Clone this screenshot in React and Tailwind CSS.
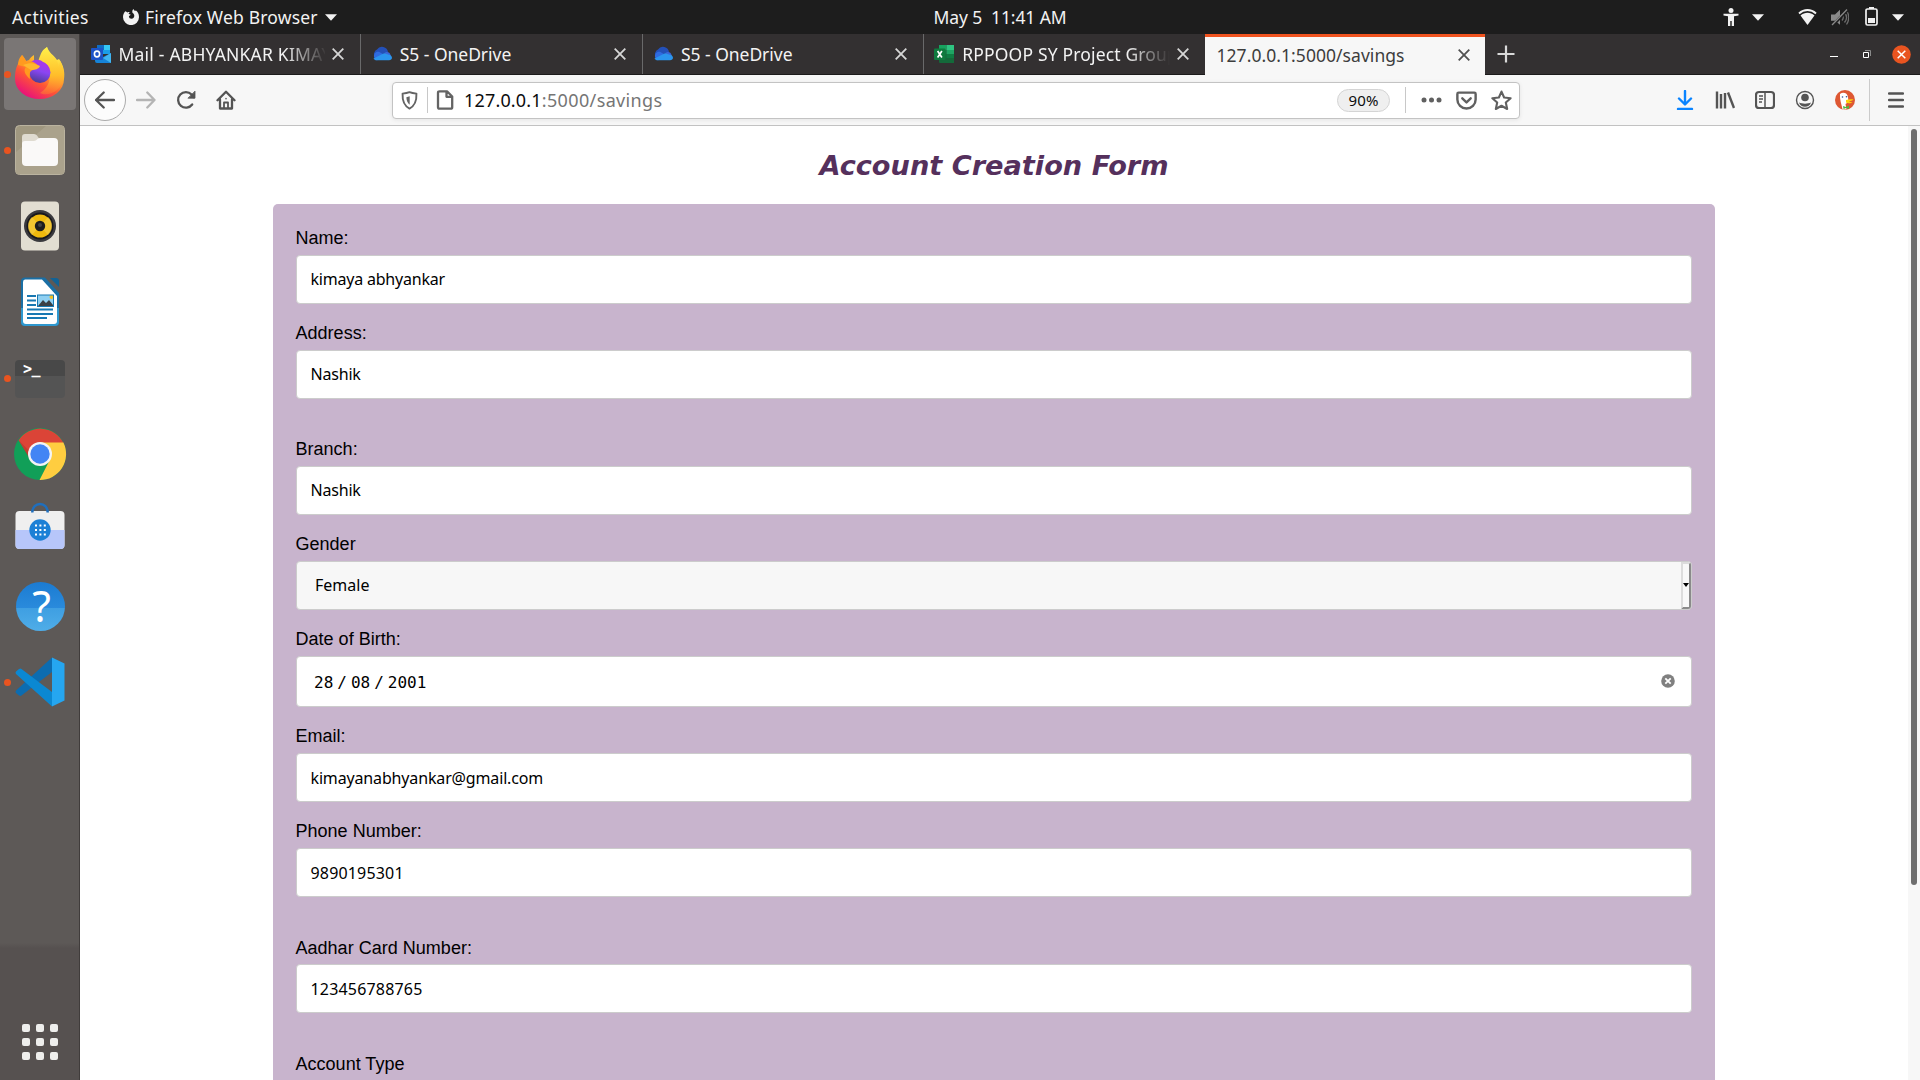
const FIELDS = [
  { label: "Name:", value: "kimaya abhyankar", spacing: "tracking-[-0.21px]" },
  { label: "Address:", value: "Nashik", spacing: "tracking-[-0.2px]", gap: true },
  { label: "Branch:", value: "Nashik", spacing: "tracking-[-0.2px]" },
  { label: "Gender", value: "Female", kind: "select" },
  { label: "Date of Birth:", kind: "date" },
  { label: "Email:", value: "kimayanabhyankar@gmail.com", spacing: "pt-px tracking-[-0.15px]" },
  { label: "Phone Number:", value: "9890195301", spacing: "pt-px tracking-[0.17px]", gap: true },
  { label: "Aadhar Card Number:", value: "123456788765", spacing: "pt-px tracking-[0.18px]", gap: true, low: true },
];

const Caret = () => (
  <svg className="block h-[7px] w-3" viewBox="0 0 12 7">
    <path d="M0 .3h12L6 6.8z" fill="#f2f2f2" />
  </svg>
);

function TopBar() {
  return (
    <div className="grid h-[34px] shrink-0 grid-cols-3 items-center bg-[#1d1d1d] text-[17.5px] leading-[34px] text-[#f2f2f2]">
      <div className="flex items-center pl-3">
        <span className="w-[111px] tracking-[0.4px]">Activities</span>
        <svg className="mr-[6px] h-4 w-4" viewBox="0 0 16 16">
          <path d="M2.3 2.2c.8.2 1.5.6 2 1.2 1-.5 2-.5 2.7-.3-.9.5-1.3 1.1-1.3 1.9l1.9.5c0 .8-1.2 1-1.7 1.7 0 1.7 1.2 2.5 2.5 2.5 2 0 2.9-1.4 2.9-2.9 0-1.6-1-2.3-1.7-2.7C9 2.7 9.2 1 10.6 0c.2 1 .8 1.5 1.7 2.1.3-.2.4-.5.4-.8C14.7 2.8 16 5 16 8a8 8 0 0 1-16 .2C0 5.8.8 3.7 2.3 2.2z" fill="#f2f2f2" />
        </svg>
        <span className="mr-[7px] tracking-[0.18px]">Firefox Web Browser</span>
        <Caret />
      </div>
      <div className="whitespace-pre pl-20 text-center tracking-[-0.1px]">May 5  11:41 AM</div>
      <div className="flex items-center justify-end pr-[16px]">
        <svg className="mr-[13px] h-[18px] w-4" viewBox="0 0 16 18">
          <circle cx="8" cy="2.5" r="2.5" fill="#f2f2f2" />
          <path d="M.5 5.8h15v1.7L11 8.3V18H8.7v-5H7.3v5H5V8.300L.5 7.5z" fill="#f2f2f2" />
        </svg>
        <Caret />
        <svg className="ml-[34px] h-4 w-[19px]" viewBox="0 0 19 16">
          <path d="M1 4.5C6-.2 13-.2 18 4.5" fill="none" stroke="#f2f2f2" strokeWidth="1.8" />
          <path d="M2.5 6.5c4.2-3.6 9.8-3.6 14 0L9.500 16z" fill="#f2f2f2" />
        </svg>
        <svg className="ml-[14px] h-[17px] w-[18px]" viewBox="0 0 18 17">
          <path d="M0 5.5h4L9 .8v15l-5-4H0z" fill="#8a8a8a" />
          <path d="M11 5.5c1.500 1.8 1.5 4.2 0 6M13.5 3.5c2.5 3 2.5 7 0 10M15.5 1.5c2.800 4.300 2.800 9.700 0 14" fill="none" stroke="#6d6d6d" strokeWidth="1.3" />
          <path d="M1.5 16.5 16.5 1" stroke="#1d1d1d" strokeWidth="3" />
          <path d="M1 16 16 .5" stroke="#8a8a8a" strokeWidth="1.3" />
        </svg>
        <svg className="-mt-px ml-[16px] h-[19px] w-[13px]" viewBox="0 0 13 19">
          <rect x="1" y="2" width="11" height="16" rx="1.5" fill="none" stroke="#f2f2f2" strokeWidth="1.7" />
          <path d="M4 0h5v2H4zM3 11h7v5H3z" fill="#f2f2f2" />
        </svg>
        <div className="ml-[14px]"><Caret /></div>
      </div>
    </div>
  );
}

const FirefoxIcon = () => (
  <svg viewBox="0 0 72 72" className="size-[72px]">
    <defs>
      <linearGradient id="ff1" x1=".85" y1=".1" x2=".3" y2="1">
        <stop offset="0" stopColor="#fff44f" />
        <stop offset=".35" stopColor="#ffb52b" />
        <stop offset=".65" stopColor="#ff5634" />
        <stop offset="1" stopColor="#e8107c" />
      </linearGradient>
      <linearGradient id="ff2" x1=".7" y1="0" x2=".4" y2="1">
        <stop offset="0" stopColor="#b533e5" />
        <stop offset=".45" stopColor="#8a45f2" />
        <stop offset="1" stopColor="#4b3d97" />
      </linearGradient>
      <linearGradient id="ff3" x1="0" y1="0" x2="0" y2="1">
        <stop offset="0" stopColor="#fff14a" />
        <stop offset=".6" stopColor="#ffbd2a" />
        <stop offset="1" stopColor="#ff7a33" stopOpacity=".5" />
      </linearGradient>
    </defs>
    <path d="M18 17c2 2 3 4 4 6l3-1c1-2 3-4 5-5v6l6 2c3-6 2-12 7-16 2 6 7 8 10 13l2-1c5 7 6 14 5 20a24.500 20 0 0 1-49 0c0-10 2-14 5-18z" fill="url(#ff1)" />
    <path d="M34 24c4-12 4-11 9-15 1 6 6 9 9 13 3 4 3 7 2 10l2-9c6 10 5 22-3 29-6 5-13 5-17 3 10-6 14-18 2-29z" fill="url(#ff3)" />
    <circle cx="36" cy="34.5" r="10.5" fill="url(#ff2)" />
    <path d="M26 25c3-4 10-4 13-1 3 1 6 4 6 8-3-3-7-4-9-3z" fill="#a33bea" />
    <path d="M18 17l5 7c3-1 5-1 8 1l4 3c-1 3-5 3-8 5-2 2-1 6-1 8-5-4-7-9-4-12l-8-2c0-4 1-7 4-10z" fill="#ff9a1f" />
    <path d="M19 27c5-2 9-2 12-1l5 2c-1 3-5 4-9 4z" fill="#ffb72e" />
  </svg>
);

const FilesIcon = () => (
  <svg viewBox="0 0 72 72" className="size-[72px]">
    <rect x="11.5" y="11.5" width="49" height="49" rx="4" fill="#a09880" stroke="#bab39f" />
    <path d="M12 38 42 12h16q2 0 2 2v44q0 2-2 2H14q-2 0-2-2z" fill="#aaa28c" />
    <path d="M18 30v-7q0-3 3-3h9q2 0 3 1.5l2 3h9v10H18z" fill="#dfdbd0" />
    <path d="M21 27h9c3 0 3-3 6-3h14q4 0 4 4v20q0 4-4 4H22q-4 0-4-4V30q0-3 3-3z" fill="#faf9f8" />
  </svg>
);

const MusicIcon = () => (
  <svg viewBox="0 0 72 72" className="size-[72px]">
    <rect x="17" y="11.5" width="38" height="49" rx="4" fill="#e2ded2" />
    <circle cx="36" cy="36" r="16" fill="#3a3a3e" />
    <circle cx="36" cy="36" r="13.5" fill="#18181d" />
    <circle cx="36" cy="36" r="11.5" fill="#efb90d" />
    <path d="M36 36 28 45A12 12 0 0 1 28 27zM36 36l8-9A12 12 0 0 1 44 45z" fill="#f7d04a" opacity=".6" />
    <circle cx="36" cy="36" r="5.2" fill="#1e1e1e" />
    <circle cx="36" cy="35" r="2" fill="#444" />
  </svg>
);

const WriterIcon = () => (
  <svg viewBox="0 0 72 72" className="size-[72px]">
    <path d="M21 11.5h20L55 27v29q0 4-4 4H21q-4 0-4-4V15.500q0-4 4-4z" fill="#1a6fa5" />
    <path d="M17 42h38v14q0 4-4 4H21q-4 0-4-4z" fill="#2f98cf" />
    <path d="M21 13.500h17L53 30v25q0 3-3 3H22q-3 0-3-3V16q0-2.500 2-2.500z" fill="#fff" />
    <path d="M46 12h6q3 0 3 3v6z" fill="#136294" />
    <path d="M23 30h9M23 34.500h9M23 39h9M23 43.500h26M23 48h26M23 52h20" stroke="#1878b2" strokeWidth="1.9" />
    <rect x="33.5" y="29" width="16" height="11.5" fill="#8fd0f2" />
    <path d="m34 40 5-6 3 3 3-3 4 5v1.500H34z" fill="#3a3f45" />
    <circle cx="47.5" cy="31" r="2" fill="#f4bf22" />
    <rect x="33.5" y="29" width="16" height="11.5" fill="none" stroke="#1878b2" />
  </svg>
);

const TerminalIcon = () => (
  <div className="flex size-[72px] items-center justify-center pt-px">
    <div className="h-[38px] w-[50px] overflow-hidden rounded-[4px] bg-[linear-gradient(#484848_42%,#545454_42%)] pl-[8px] font-['DejaVu_Sans_Mono'] text-[15px] leading-[18px] font-bold tracking-[-0.5px] text-white">&gt;_</div>
  </div>
);

const ChromeIcon = () => (
  <svg viewBox="0 0 72 72" className="size-[72px]">
    <circle cx="36" cy="36" r="26" fill="#119f58" />
    <path d="M14.600 22.200A26 26 0 0 1 59.500 25H36L26.500 41.500z" fill="#db4437" />
    <path d="M36 24.500h23.400A26 26 0 0 1 35.500 62L46 41.500z" fill="#ffcd40" />
    <path d="m14.600 22.200 11.900 20-2-10z" fill="#a8352c" opacity=".5" />
    <circle cx="36" cy="36" r="12" fill="#f4f4f4" />
    <circle cx="36" cy="36" r="9.7" fill="#4285f4" />
  </svg>
);

const SoftwareIcon = () => (
  <svg viewBox="0 0 72 72" className="size-[72px]">
    <rect x="11.5" y="17" width="49" height="38" rx="4" fill="#efefef" />
    <path d="M11.500 36h49v15q0 4-4 4h-41q-4 0-4-4z" fill="#b7c6fa" />
    <path d="M28.300 18.500C28.300 7 43.700 7 43.700 18.500" fill="none" stroke="#1f6fbe" strokeWidth="2.5" />
    <circle cx="36" cy="36" r="10.7" fill="#1c80d6" />
    <path d="M31 31.500h12M31 36h12M31 40.500h12" stroke="#fff" strokeWidth="2" strokeDasharray="2 2.4" />
  </svg>
);

const HelpIcon = () => (
  <div className="flex size-[72px] items-center justify-center">
    <div className="size-[49px] rounded-full bg-[linear-gradient(#1b7bd2_0%,#2a8bdc_54%,#3f9fe2_54%,#4fade8_100%)] pl-[3px] text-center font-['Noto_Sans'] text-[43px] leading-[47px] text-white">?</div>
  </div>
);

const CodeIcon = () => (
  <svg viewBox="0 0 72 72" className="size-[72px]">
    <path d="M48 11.500 12 44.500q-1 1.500 0 2.500l3 2.500q1.500.8 2.500 0L48 26z" fill="#0c6cb0" />
    <path d="M48 60.500 12 28q-1-1.500 0-2.500l3-2.500q1.500-.8 2.500 0L48 46z" fill="#0b88d2" />
    <path d="M48 11.500 60.500 17.500v37L48 60.500z" fill="#25a6f0" />
  </svg>
);

const DOCK = [
  { Icon: FirefoxIcon, running: true, active: true },
  { Icon: FilesIcon, running: true },
  { Icon: MusicIcon },
  { Icon: WriterIcon },
  { Icon: TerminalIcon, running: true },
  { Icon: ChromeIcon },
  { Icon: SoftwareIcon },
  { Icon: HelpIcon },
  { Icon: CodeIcon, running: true },
];

function Dock() {
  return (
    <div className="flex w-20 shrink-0 flex-col justify-between border-r border-[#403c3b] bg-[linear-gradient(#5d5957_0,#5d5957_909px,#565150_914px)] pt-1 pb-[20px]">
      <div className="flex flex-col gap-1 pl-1">
        {DOCK.map(({ Icon, running, active }, i) => (
          <div key={i} className={active ? "relative size-[72px] rounded-[4px] bg-[#7a7675]" : "relative size-[72px]"}>
            <Icon />
            {running && <div className="absolute top-[33px] left-0 size-[7px] rounded-full bg-[#e95420]" />}
          </div>
        ))}
      </div>
      <div className="ml-[22px] grid w-9 grid-cols-3 gap-[6px]">
        {Array.from({ length: 9 }, (_, i) => (
          <div key={i} className="size-2 rounded-[2px] bg-[#eeeeec]" />
        ))}
      </div>
    </div>
  );
}

const OutlookIcon = () => (
  <svg className="size-5 shrink-0" viewBox="0 0 20 20">
    <path d="M6 1h13v9H6z" fill="#1b9de8" />
    <path d="M6 1h7v5H6z" fill="#0f6cc4" />
    <path d="M13 1h6v5h-6z" fill="#35c7f5" />
    <path d="M4 9l8 4 8-4v10H6q-2 0-2-2z" fill="#1683d8" />
    <path d="m12 14 8-5v10z" fill="#41b4f0" />
    <rect y="4" width="12" height="12" rx="1" fill="#1d53c8" />
    <ellipse cx="6" cy="10" rx="2.6" ry="2.9" fill="none" stroke="#fff" strokeWidth="1.6" />
  </svg>
);

const CloudIcon = () => (
  <svg className="size-5 shrink-0" viewBox="0 0 20 20">
    <path d="M3 13a5 5 0 0 1 2-7.500A6 6 0 0 1 16 8z" fill="#2450b8" />
    <path d="M4.500 16.200A4.500 4.500 0 0 1 4.500 8c2-.5 3 0 4.500 1l9 5z" fill="#2f6be0" />
    <path d="M12 9.500c1-2 6-2.500 6.500 1.500L19 14z" fill="#3a66d8" />
    <path d="M1.500 14.500 12 9.200l6.500 2q1.500 1 1.500 2.600c0 1.600-1.300 2.500-3 2.500H4.500c-1.300 0-2.300-.7-3-1.800z" fill="#2b95ee" />
  </svg>
);

const ExcelIcon = () => (
  <svg className="size-5 shrink-0" viewBox="0 0 20 20">
    <path d="M5 1h7.500v5H5z" fill="#17a35f" />
    <path d="M12.500 1H20v5h-7.500z" fill="#2fc481" />
    <path d="M5 6h7.500v8H5z" fill="#117a41" />
    <path d="M12.500 6H20v4h-7.500z" fill="#1fa463" />
    <path d="M5 10h15v9H6q-1 0-1-1z" fill="#14693a" />
    <path d="M12.500 10H20v4h-7.500z" fill="#0f7c42" />
    <rect y="4.5" width="11.5" height="11.5" rx="1" fill="#0f7a3e" />
    <path d="m3.600 7 4.300 6.500M7.900 7l-4.300 6.500" stroke="#fff" strokeWidth="1.7" />
  </svg>
);

const TabClose = ({ dark }) => (
  <svg className="size-3 shrink-0" viewBox="0 0 12 12">
    <path d="m.7.7 10.600 10.600M11.300.7.700 11.300" stroke={dark ? "#505050" : "#d6d6d6"} strokeWidth="1.8" />
  </svg>
);

const TABS = [
  { Icon: OutlookIcon, title: "Mail - ABHYANKAR KIMAYA", spacing: "tracking-[0.21px]", fade: true },
  { Icon: CloudIcon, title: "S5 - OneDrive", spacing: "tracking-[-0.04px]" },
  { Icon: CloudIcon, title: "S5 - OneDrive", spacing: "tracking-[-0.04px]" },
  { Icon: ExcelIcon, title: "RPPOOP SY Project Group", spacing: "tracking-[0.16px]", fade: true, last: true },
];

function TabBar() {
  return (
    <div className="flex h-[41px] shrink-0 border-b border-[#1c1b1b] bg-[#333031] text-[17.5px] text-[#f3f3f3]">
      {TABS.map(({ Icon, title, spacing, fade, last }, i) => (
        <div key={i} className={`flex w-[281.25px] items-center pr-[16px] pl-[10.5px] ${last ? "" : "border-r border-[#69696a]"}`}>
          <Icon />
          <div className={`ml-2 min-w-0 flex-1 overflow-hidden pt-px leading-[39px] whitespace-nowrap ${spacing} ${fade ? "mr-[7px] [mask-image:linear-gradient(to_right,black_165px,transparent_208px)]" : ""}`}>
            {title}
          </div>
          <TabClose />
        </div>
      ))}
      <div className="-mb-px flex h-[41px] w-[280px] items-center border-t-[3px] border-[#f0531f] bg-[#f7f7f7] pr-[15px] pb-[3px] pl-[11.5px] text-[#3d3d3d]">
        <div className="flex-1 pt-px tracking-[0.05px]">127.0.0.1:5000/savings</div>
        <TabClose dark />
      </div>
      <svg className="mt-[11px] ml-[12px] size-[18px]" viewBox="0 0 18 18">
        <path d="M9 .5v17M.5 9h17" stroke="#d9d9d9" strokeWidth="2.2" />
      </svg>
      <div className="ml-auto flex items-center gap-[25px] pr-[9px]">
        <div className="mt-[5px] h-px w-2 bg-white" />
        <svg className="size-2" viewBox="0 0 8 8">
          <path d="M.5 2.500h5v5h-5z" fill="none" stroke="#fff" />
          <path d="M2 .5h5.500V6" fill="none" stroke="#8b8b8b" />
        </svg>
        <svg className="-ml-[4px] size-[19px]" viewBox="0 0 19 19">
          <circle cx="9.5" cy="9.5" r="9.3" fill="#e95420" />
          <path d="m5.700 5.700 7.600 7.600M13.300 5.700l-7.600 7.600" stroke="#fff" strokeWidth="1.5" />
        </svg>
      </div>
    </div>
  );
}

const Line = ({ children, color = "#545454", className = "size-5", width = 2.3 }) => (
  <svg className={className} viewBox="0 0 20 20" fill="none" stroke={color} strokeWidth={width} strokeLinecap="round" strokeLinejoin="round">
    {children}
  </svg>
);

function Toolbar() {
  return (
    <div className="flex h-[51px] shrink-0 items-center border-b border-[#c2c2c2] bg-[#f7f7f7]">
      <div className="ml-1 flex size-[42px] items-center justify-center rounded-full border border-[#ababab] bg-[#fcfcfc]">
        <Line><path d="M1 10H19M8.700 2.500 1 10l7.700 7.500" /></Line>
      </div>
      <Line className="ml-[10px] size-5" color="#b4b4b4"><path d="M1 10h17.500M11.300 2.500l7.200 7.500-7.200 7.500" /></Line>
      <Line className="ml-[20px] size-5">
        <path d="M16.200 14.500A7.800 7.800 0 1 1 15.600 4.500L17.500 7" />
        <path d="M19 1.500v6.700h-6.700z" fill="#545454" strokeWidth=".8" />
      </Line>
      <Line className="ml-[20px] size-5">
        <path d="M1.500 10.200 10 1.700l8.500 8.500M4 9.500v9h12v-9" />
        <path d="M8 18v-5.500h4V18" strokeWidth="1.8" />
        <path d="M10 8.500v.2" strokeWidth="1.5" />
      </Line>
      <div className="ml-[155.500px] flex h-[37px] w-[1128px] items-center rounded-[4px] border border-[#c3c3c3] bg-white shadow-[0_1px_4px_rgba(0,0,0,0.08)]">
        <Line className="ml-[7px] size-[19px]" color="#646464" width={2}>
          <path d="M10 1.300c2.500 1 5 1.300 7.300 1.500.3 7-1.300 12.700-7.300 15.700-6-3-7.600-8.700-7.300-15.700 2.300-.2 4.800-.5 7.300-1.500z" />
          <path d="M10.200 5.500v9c-2.500-2-3.300-4.500-3.500-8z" fill="#646464" stroke="none" />
        </Line>
        <div className="ml-[8.5px] h-[26px] w-px bg-[#c8c8c8]" />
        <Line className="ml-[7px] size-5" color="#646464"><path d="M4.500 1.300H12l5.200 5.200v10.700q0 1.500-1.500 1.500H4.500Q3 18.700 3 17.200V2.800q0-1.500 1.500-1.500zM11.500 1.500v5.300H17" /></Line>
        <div className="ml-[9px] flex-1 text-[18px] leading-[35px] text-[#757575]">
          <span className="tracking-[0.17px] text-[#0c0c0d]">127.0.0.1</span>
          <span className="tracking-[0.36px]">:5000/savings</span>
        </div>
        <div className="flex h-[23px] w-[53px] items-center justify-center rounded-full border border-[#d4d4d4] bg-[#efefef] text-[15px] leading-none tracking-[0.19px] text-[#0c0c0d]">90%</div>
        <div className="ml-[14.5px] h-[26px] w-px bg-[#c8c8c8]" />
        <svg className="ml-[15px] h-[6px] w-[21px]" viewBox="0 0 21 6">
          <g fill="#606060"><circle cx="3" cy="3" r="2.5" /><circle cx="10.5" cy="3" r="2.5" /><circle cx="18" cy="3" r="2.5" /></g>
        </svg>
        <Line className="ml-[14px] size-[21px]" color="#606060">
          <path d="M2.500 2.500h15q1.200 0 1.200 1.200V9a8.700 8.700 0 0 1-17.400 0V3.700q0-1.200 1.200-1.200z" />
          <path d="m6 8 4 3.800L14 8" />
        </Line>
        <Line className="mr-[7px] ml-[14px] size-[21px]" color="#606060" width={2}>
          <path d="m10 1.500 2.500 5.600 6.200.7-4.600 4.100 1.300 6.200L10 15l-5.400 3.100 1.300-6.200L1.300 7.800l6.200-.7z" />
        </Line>
      </div>
      <div className="ml-auto flex items-center pr-[16px]">
        <Line className="size-5" color="#0a84ff" width={2.4}><path d="M10 1v13M4 8.500l6 6 6-6" /><path d="M3 19h14" /></Line>
        <svg className="ml-5 size-5" viewBox="0 0 20 20" fill="none" stroke="#545454" strokeWidth="2.4">
          <path d="M2 1.500v17M6 4v14.500M10 3v15.500" /><path d="m13 2.500 6 15.500" />
        </svg>
        <svg className="ml-5 size-5" viewBox="0 0 20 20" fill="none" stroke="#545454" strokeWidth="2.2">
          <rect x="1" y="2" width="18" height="16" rx="3" /><path d="M10 2v16" strokeWidth="1.5" /><path d="M4 6h4M4 9h4M4 12h3" strokeWidth="1.5" />
        </svg>
        <svg className="ml-5 size-5" viewBox="0 0 20 20">
          <circle cx="10" cy="10" r="8.5" fill="none" stroke="#545454" strokeWidth="1.4" />
          <circle cx="10" cy="7.5" r="3.8" fill="#545454" />
          <path d="M4 12.500c3 1.500 9 1.500 12 0-1 3-3.300 4.300-6 4.300s-5-1.300-6-4.300z" fill="#545454" />
        </svg>
        <svg className="ml-5 size-5" viewBox="0 0 20 20">
          <circle cx="10" cy="10" r="10" fill="#de5833" />
          <path d="M5 4c3-2.500 7.500-1 8 3l.5 5-3 2 1 5.200c-2 .5-3 .3-4 0C6.500 14.500 4.500 9 5 4z" fill="#fff" />
          <path d="M11 10c3-1 5-1 7.500-.5-1 1.300-3 1.500-5 2 2 .6 3 .5 4 .5-1.500 1.800-5 1.500-6.500.6z" fill="#fdd20a" />
          <path d="m8 16 3 1 3-1.500v3.200L11 18l-2.500 1z" fill="#4cba3c" />
          <circle cx="7.5" cy="7" r=".8" fill="#2d4f8e" /><circle cx="11.5" cy="6.7" r=".8" fill="#2d4f8e" />
        </svg>
        <div className="ml-[14px] h-[42px] w-px bg-[#cbcbcb]" />
        <svg className="ml-[18px] h-4 w-[16px]" viewBox="0 0 16 16">
          <path d="M1 1.500h14M1 8h14M1 14.500h14" stroke="#545454" strokeWidth="2.3" strokeLinecap="round" />
        </svg>
      </div>
    </div>
  );
}

function Control({ field }) {
  if (field.kind === "select") {
    return (
      <div className="flex h-[49px] items-center justify-between rounded-[4px] border border-[#ccc] bg-[#f7f7f7] pl-[18px]">
        <span className="-mt-px">Female</span>
        <div className="flex h-[47px] w-[10px] items-center justify-center rounded-r-[3px] border-2 border-t-[#dcdcdc] border-r-[#8a8a8a] border-b-[#8a8a8a] border-l-[#dcdcdc] bg-[#f8f8f8]">
          <svg className="-mt-px h-1 w-[6px] shrink-0" viewBox="0 0 6 4"><path d="M0 0h6L3 4z" fill="#000" /></svg>
        </div>
      </div>
    );
  }
  if (field.kind === "date") {
    return (
      <div className="flex h-[51px] items-center justify-between rounded-[4px] border border-[#ccc] bg-white pr-[16px] pl-[17px] font-['DejaVu_Sans_Mono']">
        <div className="flex items-baseline pt-[2px]"><span>28</span><span className="mx-[4px]">/</span><span>08</span><span className="mx-[4px]">/</span><span>2001</span></div>
        <svg className="-mt-[2px] size-[14px]" viewBox="0 0 14 14">
          <circle cx="7" cy="7" r="6.8" fill="#808080" />
          <path d="m4.300 4.300 5.400 5.400M9.700 4.300 4.300 9.700" stroke="#fff" strokeWidth="1.8" />
        </svg>
      </div>
    );
  }
  return (
    <div className="flex h-[49px] items-center rounded-[4px] border border-[#ccc] bg-white pl-[13.5px]">
      <span className={`-mt-px ${field.spacing}`}>{field.value}</span>
    </div>
  );
}

const Label = ({ children, low }) => (
  <div className={`mb-[7px] h-5 font-['Liberation_Sans'] text-[18px] tracking-[0.02px] ${low ? "leading-[22px]" : "leading-5"}`}>
    <span className="-ml-[0.5px]">{children}</span>
  </div>
);

function Page() {
  return (
    <div className="flex min-h-0 flex-1 bg-white">
      <div className="flex min-w-0 flex-1 flex-col items-center overflow-hidden">
        <h1 className="mt-[24px] mb-[22px] h-8 font-['DejaVu_Sans'] text-[27.2px] leading-8 font-bold text-[#55305c] italic">Account Creation Form</h1>
        <form className="w-[1442px] shrink-0 rounded-t-[5px] bg-[#c8b4cd] px-[23px] pt-6 text-[16px] leading-6 text-black">
          {FIELDS.map((field) => (
            <div key={field.label} className={field.gap ? "mb-10" : "mb-[19px]"}>
              <Label low={field.low}>{field.label}</Label>
              <Control field={field} />
            </div>
          ))}
          <Label low>Account Type</Label>
        </form>
      </div>
      <div className="w-3 bg-[#f7f7f7] pt-[3px] pl-[3px]">
        <div className="h-[756px] w-[6px] rounded-full bg-[#6e6e6e]" />
      </div>
    </div>
  );
}

export default function App() {
  return (
    <div className="flex h-[1080px] w-[1920px] flex-col overflow-hidden font-['Noto_Sans',sans-serif]">
      <TopBar />
      <div className="flex min-h-0 flex-1">
        <Dock />
        <div className="flex min-w-0 flex-1 flex-col">
          <TabBar />
          <Toolbar />
          <Page />
        </div>
      </div>
    </div>
  );
}
